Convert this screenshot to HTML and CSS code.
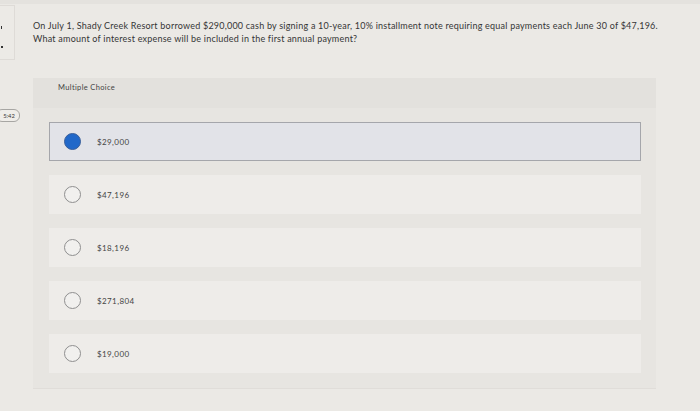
FILE: index.html
```html
<!DOCTYPE html>
<html>
<head>
<meta charset="utf-8">
<link rel="stylesheet" href="styles.css">
</head>
<body>
<div class="page">
  <aside class="side">
    <div class="side-box">
      <span class="mark mark-a"></span>
      <span class="mark mark-b"></span>
    </div>
    <div class="timer">5:42</div>
  </aside>
  <main class="main">
    <p class="question">On July 1, Shady Creek Resort borrowed $290,000 cash by signing a 10-year, 10% installment note requiring equal payments each June 30 of $47,196.<br>What amount of interest expense will be included in the first annual payment?</p>
    <section class="panel">
      <div class="panel-head">Multiple Choice</div>
      <div class="options">
        <div class="option selected"><span class="radio"></span><span class="label">$29,000</span></div>
        <div class="option"><span class="radio"></span><span class="label">$47,196</span></div>
        <div class="option"><span class="radio"></span><span class="label">$18,196</span></div>
        <div class="option"><span class="radio"></span><span class="label">$271,804</span></div>
        <div class="option"><span class="radio"></span><span class="label">$19,000</span></div>
      </div>
    </section>
  </main>
</div>
</body>
</html>
```
FILE: styles.css
```css
html, body {
  margin: 0;
  padding: 0;
}
body {
  width: 700px;
  height: 411px;
  overflow: hidden;
  background: #ebe9e5;
  font-family: Lato, "Open Sans", sans-serif;
  color: #3a3a3a;
}
.page {
  display: flex;
  height: 411px;
  border-top: 4px solid #e4e2de;
  box-sizing: border-box;
}
.side {
  width: 33px;
  flex: none;
  display: flex;
  flex-direction: column;
}
.side-box {
  width: 15px;
  height: 55px;
  margin-top: 1px;
  border: 1px solid #dedbd7;
  border-left: none;
  background: #eceae6;
  display: flex;
  flex-direction: column;
  gap: 17px;
  padding-top: 20px;
  box-sizing: border-box;
}
.mark {
  display: block;
  width: 2px;
  height: 2px;
  background: #333;
  margin-left: 1px;
}
.mark-a { width: 1px; height: 3px; }
.timer {
  margin-top: 49px;
  margin-left: -4px;
  width: 20px;
  height: 11px;
  border: 1px solid #a7a6a3;
  border-radius: 6px;
  font-size: 5.8px;
  line-height: 11px;
  text-align: center;
  padding-left: 2px;
  color: #333;
  background: #efede9;
}
.main {
  flex: 1;
  padding-top: 15px;
}
.question {
  margin: 0;
  font-size: 9px;
  line-height: 13px;
  color: #353535;
  white-space: nowrap;
  letter-spacing: 0.22px;
}
.panel {
  margin-top: 33px;
  width: 623px;
  background: #e7e5e1;
  padding-bottom: 15px;
  border-bottom: 1px solid #e0ddd9;
}
.panel-head {
  height: 30px;
  box-sizing: border-box;
  padding: 5px 0 0 25px;
  font-size: 7.5px;
  line-height: 10px;
  letter-spacing: 0.35px;
  color: #444;
  background: #e3e1dd;
}
.options {
  display: flex;
  flex-direction: column;
  gap: 14px;
  padding: 14px 15px 0 16px;
}
.option {
  height: 39px;
  display: flex;
  align-items: center;
  background: #eeece9;
  box-sizing: border-box;
  padding-left: 15px;
}
.option.selected {
  background: #e2e3e8;
  border: 1px solid #a5a6ab;
  padding-left: 14px;
}
.radio {
  width: 17px;
  height: 17px;
  box-sizing: border-box;
  border: 1px solid #8f8f8f;
  border-radius: 50%;
  background: #f1f0ee;
  flex: none;
}
.selected .radio {
  background: #2168c9;
  border-color: #3a5f9a;
}
.label {
  margin-left: 16px;
  font-size: 8px;
  letter-spacing: 0.4px;
  color: #444;
}
```
